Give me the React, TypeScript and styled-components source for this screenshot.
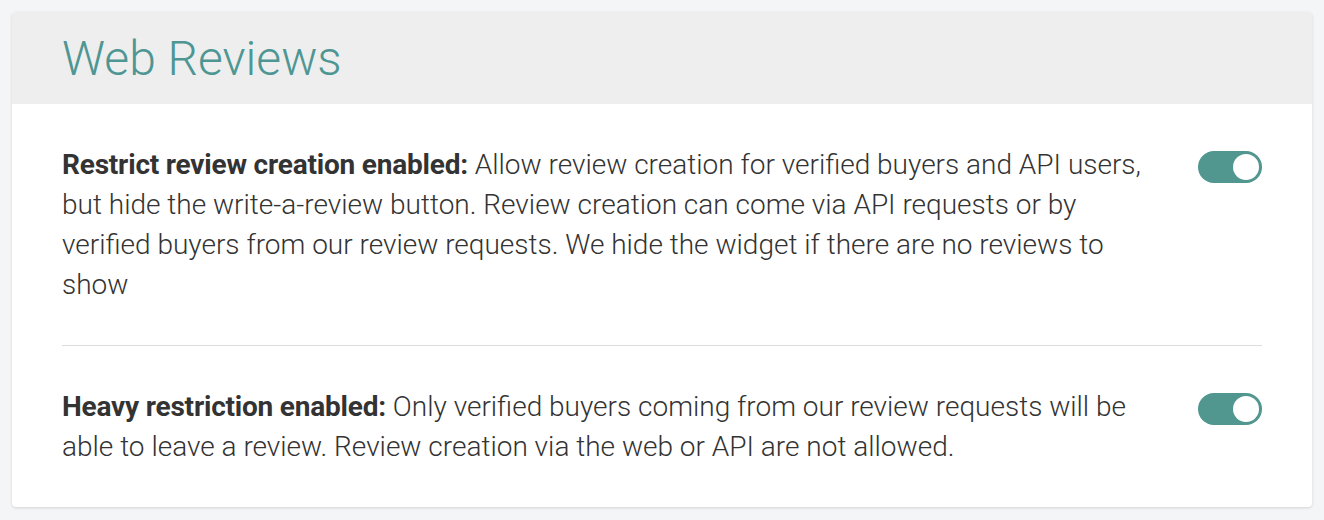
import { useState } from 'react'
import styled, { createGlobalStyle } from 'styled-components'

const GlobalStyle = createGlobalStyle`
  body {
    margin: 0;
    background: #f4f5f7;
    font-family: Roboto, 'Liberation Sans', sans-serif;
  }
`

const Page = styled.div`
  padding: 12px;
`

const Card = styled.section`
  background: #fff;
  border-radius: 4px;
  box-shadow: 0 1px 3px rgba(0, 0, 0, 0.14);
  overflow: hidden;
`

const Header = styled.header`
  height: 92px;
  display: flex;
  align-items: center;
  padding: 0 50px;
  background: #eeeeee;
`

const Title = styled.h1`
  margin: 0;
  font-size: 48px;
  font-weight: 300;
  color: #4e9693;
`

const Body = styled.div`
  padding: 0 50px;
`

const Row = styled.div`
  display: flex;
  align-items: flex-start;
  gap: 48px;
  padding: 41px 0 40px;

  & + & {
    border-top: 1px solid #dddddd;
  }
`

const Text = styled.p`
  flex: 1;
  margin: 0;
  font-size: 28px;
  line-height: 40px;
  font-weight: 300;
  color: #333;

  strong {
    font-weight: 700;
    letter-spacing: -0.2px;
  }
`

const Toggle = styled.button<{ $on: boolean }>`
  flex: none;
  position: relative;
  width: 64px;
  height: 32px;
  margin-top: 6px;
  border: none;
  border-radius: 16px;
  padding: 0;
  cursor: pointer;
  background: ${(p) => (p.$on ? '#51968f' : '#cfcfcf')};

  &::after {
    content: '';
    position: absolute;
    top: 3px;
    left: ${(p) => (p.$on ? '35px' : '3px')};
    width: 26px;
    height: 26px;
    border-radius: 50%;
    background: #fff;
    transition: left 0.15s;
  }
`

const settings = [
  {
    label: 'Restrict review creation enabled:',
    text: 'Allow review creation for verified buyers and API users, but hide the write-a-review button. Review creation can come via API requests or by verified buyers from our review requests. We hide the widget if there are no reviews to show',
  },
  {
    label: 'Heavy restriction enabled:',
    text: 'Only verified buyers coming from our review requests will be able to leave a review. Review creation via the web or API are not allowed.',
  },
]

export default function App() {
  const [on, setOn] = useState([true, true])

  const flip = (i: number) => {
    setOn(on.map((v, j) => (j === i ? !v : v)))
  }

  return (
    <>
      <GlobalStyle />
      <Page>
        <Card>
          <Header>
            <Title>Web Reviews</Title>
          </Header>
          <Body>
            {settings.map((s, i) => (
              <Row key={s.label}>
                <Text>
                  <strong>{s.label}</strong> {s.text}
                </Text>
                <Toggle $on={on[i]} onClick={() => flip(i)} aria-label={s.label} />
              </Row>
            ))}
          </Body>
        </Card>
      </Page>
    </>
  )
}
